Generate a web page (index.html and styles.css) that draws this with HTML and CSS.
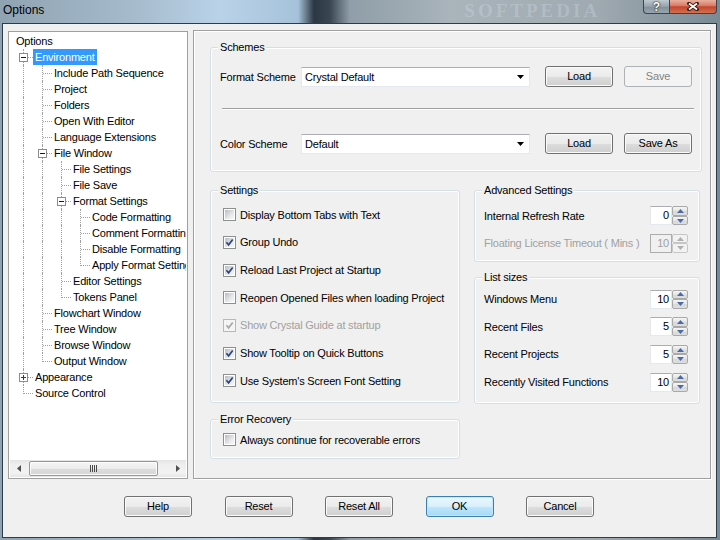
FILE: index.html
```html
<!DOCTYPE html>
<html>
<head>
<meta charset="utf-8">
<link rel="stylesheet" href="styles.css">
</head>
<body>
<div class="win">
  <div class="titlebar">
    <span class="title">Options</span>
    <span class="wm">SOFTPEDIA</span>
    <div class="caps">
      <span class="cap help">?</span>
      <span class="cap close"><svg width="12" height="9" viewBox="0 0 12 9"><path d="M2 1.5 10 7.5M10 1.5 2 7.5" stroke="#3a1a14" stroke-width="3.6" stroke-linecap="square"/><path d="M2 1.5 10 7.5M10 1.5 2 7.5" stroke="#fff" stroke-width="1.8"/></svg></span>
    </div>
  </div>
  <div class="client">
    <div class="main">
      <div class="tree">
        <div class="tree-list">
          <div class="r"><span class="lb">Options</span></div>
          <div class="r"><i class="c t"><svg class="exp" width="9" height="9" viewBox="0 0 9 9"><rect x=".5" y=".5" width="8" height="8" fill="#fff" stroke="#8c8c8c"/><path d="M2 4.5h5" stroke="#1a1a1a"/></svg></i><span class="lb sel">Environment</span></div>
          <div class="r"><i class="c v"></i><i class="c t"></i><span class="lb">Include Path Sequence</span></div>
          <div class="r"><i class="c v"></i><i class="c t"></i><span class="lb">Project</span></div>
          <div class="r"><i class="c v"></i><i class="c t"></i><span class="lb">Folders</span></div>
          <div class="r"><i class="c v"></i><i class="c t"></i><span class="lb">Open With Editor</span></div>
          <div class="r"><i class="c v"></i><i class="c t"></i><span class="lb">Language Extensions</span></div>
          <div class="r"><i class="c v"></i><i class="c t"><svg class="exp" width="9" height="9" viewBox="0 0 9 9"><rect x=".5" y=".5" width="8" height="8" fill="#fff" stroke="#8c8c8c"/><path d="M2 4.5h5" stroke="#1a1a1a"/></svg></i><span class="lb">File Window</span></div>
          <div class="r"><i class="c v"></i><i class="c v"></i><i class="c t"></i><span class="lb">File Settings</span></div>
          <div class="r"><i class="c v"></i><i class="c v"></i><i class="c t"></i><span class="lb">File Save</span></div>
          <div class="r"><i class="c v"></i><i class="c v"></i><i class="c t"><svg class="exp" width="9" height="9" viewBox="0 0 9 9"><rect x=".5" y=".5" width="8" height="8" fill="#fff" stroke="#8c8c8c"/><path d="M2 4.5h5" stroke="#1a1a1a"/></svg></i><span class="lb">Format Settings</span></div>
          <div class="r"><i class="c v"></i><i class="c v"></i><i class="c v"></i><i class="c t"></i><span class="lb">Code Formatting</span></div>
          <div class="r"><i class="c v"></i><i class="c v"></i><i class="c v"></i><i class="c t"></i><span class="lb">Comment Formatting</span></div>
          <div class="r"><i class="c v"></i><i class="c v"></i><i class="c v"></i><i class="c t"></i><span class="lb">Disable Formatting</span></div>
          <div class="r"><i class="c v"></i><i class="c v"></i><i class="c v"></i><i class="c l"></i><span class="lb">Apply Format Settings</span></div>
          <div class="r"><i class="c v"></i><i class="c v"></i><i class="c t"></i><span class="lb">Editor Settings</span></div>
          <div class="r"><i class="c v"></i><i class="c v"></i><i class="c l"></i><span class="lb">Tokens Panel</span></div>
          <div class="r"><i class="c v"></i><i class="c t"></i><span class="lb">Flowchart Window</span></div>
          <div class="r"><i class="c v"></i><i class="c t"></i><span class="lb">Tree Window</span></div>
          <div class="r"><i class="c v"></i><i class="c t"></i><span class="lb">Browse Window</span></div>
          <div class="r"><i class="c v"></i><i class="c l"></i><span class="lb">Output Window</span></div>
          <div class="r"><i class="c t"><svg class="exp" width="9" height="9" viewBox="0 0 9 9"><rect x=".5" y=".5" width="8" height="8" fill="#fff" stroke="#8c8c8c"/><path d="M2 4.5h5M4.5 2v5" stroke="#1c3c8c"/></svg></i><span class="lb">Appearance</span></div>
          <div class="r"><i class="c l"></i><span class="lb">Source Control</span></div>
        </div>
        <div class="hs">
          <span class="arr"><svg width="4" height="7" viewBox="0 0 4 7"><path d="M4 0 0 3.5 4 7Z" fill="#505050"/></svg></span>
          <span class="thumb"><svg width="7" height="7" viewBox="0 0 7 7"><path d="M.5 0v7M2.5 0v7M4.5 0v7M6.5 0v7" stroke="#4a4a4a"/></svg></span>
          <span class="sp"></span>
          <span class="arr"><svg width="4" height="7" viewBox="0 0 4 7"><path d="M0 0 4 3.5 0 7Z" fill="#505050"/></svg></span>
        </div>
      </div>

      <div class="panel">
        <fieldset class="grp schemes">
          <legend>Schemes</legend>
          <div class="srow r1">
            <span class="slabel">Format Scheme</span>
            <span class="combo"><span>Crystal Default</span><svg width="7" height="4" viewBox="0 0 7 4"><path d="M0 0h7L3.5 4Z" fill="#000"/></svg></span>
            <span class="btn b1">Load</span>
            <span class="btn b2 disabled">Save</span>
          </div>
          <div class="sep"></div>
          <div class="srow r2">
            <span class="slabel">Color Scheme</span>
            <span class="combo"><span>Default</span><svg width="7" height="4" viewBox="0 0 7 4"><path d="M0 0h7L3.5 4Z" fill="#000"/></svg></span>
            <span class="btn b1">Load</span>
            <span class="btn b2">Save As</span>
          </div>
        </fieldset>

        <div class="cols">
          <div class="col left">
            <fieldset class="grp settings">
              <legend>Settings</legend>
              <div class="rows">
                <div class="crow"><i class="cb"></i><span>Display Bottom Tabs with Text</span></div>
                <div class="crow"><i class="cb"><svg width="9" height="9" viewBox="0 0 9 9"><path d="M1.4 4.3 3.6 6.8 7.7 1.5" fill="none" stroke="#2a4488" stroke-width="1.7"/></svg></i><span>Group Undo</span></div>
                <div class="crow"><i class="cb"><svg width="9" height="9" viewBox="0 0 9 9"><path d="M1.4 4.3 3.6 6.8 7.7 1.5" fill="none" stroke="#2a4488" stroke-width="1.7"/></svg></i><span>Reload Last Project at Startup</span></div>
                <div class="crow"><i class="cb"></i><span>Reopen Opened Files when loading Project</span></div>
                <div class="crow dis"><i class="cb"><svg width="9" height="9" viewBox="0 0 9 9"><path d="M1.4 4.3 3.6 6.8 7.7 1.5" fill="none" stroke="#a8a8a8" stroke-width="1.7"/></svg></i><span>Show Crystal Guide at startup</span></div>
                <div class="crow"><i class="cb"><svg width="9" height="9" viewBox="0 0 9 9"><path d="M1.4 4.3 3.6 6.8 7.7 1.5" fill="none" stroke="#2a4488" stroke-width="1.7"/></svg></i><span>Show Tooltip on Quick Buttons</span></div>
                <div class="crow"><i class="cb"><svg width="9" height="9" viewBox="0 0 9 9"><path d="M1.4 4.3 3.6 6.8 7.7 1.5" fill="none" stroke="#2a4488" stroke-width="1.7"/></svg></i><span>Use System's Screen Font Setting</span></div>
              </div>
            </fieldset>
            <fieldset class="grp error">
              <legend>Error Recovery</legend>
              <div class="erow"><i class="cb"></i><span>Always continue for recoverable errors</span></div>
            </fieldset>
          </div>

          <div class="col right">
            <fieldset class="grp adv">
              <legend>Advanced Settings</legend>
              <div class="rows">
                <div class="spin-row"><span>Internal Refresh Rate</span><span class="spin"><span class="num">0</span><span class="ud"><span><svg width="7" height="4" viewBox="0 0 7 4"><path d="M0 4h7L3.5 0Z"/></svg></span><span><svg width="7" height="4" viewBox="0 0 7 4"><path d="M0 0h7L3.5 4Z"/></svg></span></span></span></div>
                <div class="spin-row dis"><span>Floating License Timeout ( Mins )</span><span class="spin"><span class="num">10</span><span class="ud"><span><svg width="7" height="4" viewBox="0 0 7 4"><path d="M0 4h7L3.5 0Z"/></svg></span><span><svg width="7" height="4" viewBox="0 0 7 4"><path d="M0 0h7L3.5 4Z"/></svg></span></span></span></div>
              </div>
            </fieldset>
            <fieldset class="grp lists">
              <legend>List sizes</legend>
              <div class="rows">
                <div class="spin-row"><span>Windows Menu</span><span class="spin"><span class="num">10</span><span class="ud"><span><svg width="7" height="4" viewBox="0 0 7 4"><path d="M0 4h7L3.5 0Z"/></svg></span><span><svg width="7" height="4" viewBox="0 0 7 4"><path d="M0 0h7L3.5 4Z"/></svg></span></span></span></div>
                <div class="spin-row"><span>Recent Files</span><span class="spin"><span class="num">5</span><span class="ud"><span><svg width="7" height="4" viewBox="0 0 7 4"><path d="M0 4h7L3.5 0Z"/></svg></span><span><svg width="7" height="4" viewBox="0 0 7 4"><path d="M0 0h7L3.5 4Z"/></svg></span></span></span></div>
                <div class="spin-row"><span>Recent Projects</span><span class="spin"><span class="num">5</span><span class="ud"><span><svg width="7" height="4" viewBox="0 0 7 4"><path d="M0 4h7L3.5 0Z"/></svg></span><span><svg width="7" height="4" viewBox="0 0 7 4"><path d="M0 0h7L3.5 4Z"/></svg></span></span></span></div>
                <div class="spin-row"><span>Recently Visited Functions</span><span class="spin"><span class="num">10</span><span class="ud"><span><svg width="7" height="4" viewBox="0 0 7 4"><path d="M0 4h7L3.5 0Z"/></svg></span><span><svg width="7" height="4" viewBox="0 0 7 4"><path d="M0 0h7L3.5 4Z"/></svg></span></span></span></div>
              </div>
            </fieldset>
          </div>
        </div>
      </div>
    </div>

    <div class="buttons">
      <span class="btn">Help</span>
      <span class="btn">Reset</span>
      <span class="btn">Reset All</span>
      <span class="btn default">OK</span>
      <span class="btn">Cancel</span>
    </div>
  </div>
</div>
</body>
</html>
```

FILE: styles.css
```css
* { box-sizing: border-box; }
html, body { margin: 0; padding: 0; }
body {
  width: 720px;
  height: 540px;
  overflow: hidden;
  font-family: "Liberation Sans", Arial, sans-serif;
  font-size: 11px;
  letter-spacing: -0.2px;
  color: #000;
  background: linear-gradient(90deg, #8fa3b3 0px, #a3b8c8 120px, #b9d2e8 220px, #a6c2da 298px, #2b3742 314px, #3a4753 330px, #8f9ea8 350px, #a9b4bb 450px, #9ea9b0 600px, #7a8a95 720px);
}
.win { display: flex; flex-direction: column; height: 540px; }

/* title bar */
.titlebar { height: 23px; flex: none; display: flex; align-items: flex-start; padding-left: 3px; }
.title { font-size: 12px; line-height: 21px; letter-spacing: 0; color: #000; }
.wm { flex: none; margin-left: 420px; font-family: "Liberation Serif", serif; font-weight: bold; font-size: 19px; line-height: 22px; letter-spacing: 3px; color: rgba(220, 228, 235, 0.28); }
.caps { margin-left: auto; margin-right: 3px; display: flex; }
.cap { height: 14px; display: flex; align-items: center; justify-content: center; border: 1px solid #3a4450; border-top: none; }
.help { width: 27px; border-radius: 0 0 0 4px; background: linear-gradient(#c0c9d0, #95a2ac 50%, #828f9a 51%, #97a5af); color: #fff; font-weight: bold; font-size: 12px; line-height: 12px; letter-spacing: 0; text-shadow: 0 0 2px #1a1a1a, 0 0 1px #1a1a1a; }
.close { width: 47px; border-left: none; border-radius: 0 0 4px 0; background: linear-gradient(#eab0a0, #d67a62 45%, #c4452c 52%, #d2704f); }

/* client */
.client { flex: 1; margin: 0 3px 2px 2px; border: 1px solid #2e3b48; background: #f0f0f0; display: flex; flex-direction: column; }
.main { display: flex; gap: 5px; padding: 6px 0 0 5px; }

/* tree */
.tree { width: 180px; height: 448px; margin-top: 1px; border: 1px solid #a0a0a0; padding: 1px; background: #fff; display: flex; flex-direction: column; }
.tree-list { flex: 1; overflow: hidden; }
.r { display: flex; height: 16px; padding-left: 4px; white-space: nowrap; }
.c { flex: none; width: 19px; height: 16px; position: relative; }
.v::before, .t::before { content: ""; position: absolute; left: 9px; top: 0; bottom: 0; border-left: 1px dotted #a0a0a0; }
.l::before { content: ""; position: absolute; left: 9px; top: 0; height: 9px; border-left: 1px dotted #a0a0a0; }
.t::after, .l::after { content: ""; position: absolute; left: 10px; right: 0; top: 8px; border-top: 1px dotted #a0a0a0; }
.exp { position: absolute; left: 5px; top: 4px; z-index: 1; display: block; }
.lb { padding: 0 2px; line-height: 16px; }
.sel { background: #3399ff; color: #fff; }

.hs { height: 17px; flex: none; display: flex; align-items: center; background: linear-gradient(#e3e3e3, #eeeeee 25%, #f2f2f2 75%, #e6e6e6); }
.arr { width: 17px; height: 17px; flex: none; display: flex; align-items: center; justify-content: center; }
.arr svg, .thumb svg { display: block; }
.thumb { width: 129px; height: 15px; margin-left: 2px; flex: none; border: 1px solid #979797; border-radius: 2px; background: linear-gradient(#f6f6f6, #ececec 50%, #dcdcdc 51%, #d6d6d6); box-shadow: inset 0 0 0 1px #fbfbfb; display: flex; align-items: center; justify-content: center; }
.sp { flex: 1; }

/* right panel */
.panel { width: 518px; height: 449px; border: 1px solid #a0a0a0; box-shadow: inset 1px 1px 0 #fff, 1px 1px 0 #fff; padding: 10px 0 0 16px; }
.grp { margin: 0; padding: 0; min-width: 0; border: 1px solid #d5dfe5; border-radius: 3px; box-shadow: inset 0 0 0 1px #fff; }
.grp legend { margin-left: 7px; padding: 0 2px; line-height: 13px; background: #f0f0f0; }

.schemes { width: 492px; padding-bottom: 17px; }
.srow { display: flex; align-items: center; height: 21px; padding-left: 9px; }
.srow.r1 { margin-top: 12px; }
.srow.r2 { margin-top: 24px; }
.slabel { width: 81px; flex: none; }
.combo { width: 229px; height: 20px; flex: none; display: flex; align-items: center; justify-content: space-between; padding: 0 5px 0 3px; background: #fff; border: 1px solid #e3e9ef; border-top-color: #abadb3; }
.combo svg { display: block; }
.sep { margin: 21px 0 0 11px; width: 472px; height: 1px; background: #a0a0a0; box-shadow: 0 1px 0 #fff; }

.btn { flex: none; display: inline-block; width: 68px; height: 21px; line-height: 19px; text-align: center; border: 1px solid #707070; border-radius: 3px; background: linear-gradient(#f2f2f2, #ebebeb 50%, #dddddd 51%, #cfcfcf); box-shadow: inset 0 0 0 1px #fbfbfb; color: #000; }
.btn.b1 { margin-left: 15px; }
.btn.b2 { margin-left: 11px; }
.btn.disabled { border-color: #adb2b5; background: #f4f4f4; box-shadow: none; color: #838383; }
.btn.default { border-color: #3c7fb1; background: linear-gradient(#eaf6fd, #d9f0fc 50%, #bee6fd 51%, #a7d9f5); box-shadow: inset 0 0 0 1px #c4e6f9; }

.cols { display: flex; gap: 14px; margin-top: 12px; }
.col { display: flex; flex-direction: column; }
.col.left { width: 250px; }
.col.right { width: 226px; }

.settings .rows { padding: 4px 0 7px 12px; }
.crow { height: 27.67px; display: flex; align-items: center; }
.crow.dis { color: #a0a0a0; }
.cb { display: inline-block; flex: none; width: 13px; height: 13px; margin-right: 4px; border: 1px solid #8e8f8f; padding: 1px; background: linear-gradient(135deg, #b8bcc2, #e6e8ea 60%, #f8f8f8) content-box, #fff; }
.cb svg { display: block; }
.crow.dis .cb { border-color: #b8b8b8; background: #f4f4f4; }

.error { margin-top: 10px; }
.erow { height: 14px; display: flex; align-items: center; margin: 7px 0 11px 12px; }

.adv .rows { padding: 5px 0 4px 0; }
.lists { margin-top: 9px; }
.lists .rows { padding: 1px 0 7px 0; }
.spin-row { height: 27.67px; display: flex; align-items: center; justify-content: space-between; padding: 0 11px 0 9px; }
.spin-row.dis { color: #a0a0a0; }
.spin { display: flex; height: 19px; }
.num { width: 22px; height: 19px; background: #fff; border: 1px solid #e3e9ef; border-top-color: #abadb3; text-align: right; padding-right: 2px; line-height: 17px; color: #000; }
.ud { width: 16px; height: 19px; display: flex; flex-direction: column; }
.ud span { flex: 1; display: flex; align-items: center; justify-content: center; border: 1px solid #a9a9a9; border-radius: 2px; background: linear-gradient(#f6f6f6, #e4e4e4 50%, #d8d8d8 51%, #dedede); }
.ud svg { display: block; fill: #4d6aa8; }
.spin-row.dis .num { background: #f0f0f0; border-color: #adadad; color: #a0a0a0; }
.spin-row.dis .ud span { border-color: #c6c6c6; background: #f2f2f2; }
.spin-row.dis .ud svg { fill: #b0b0b0; }

.buttons { display: flex; gap: 32.5px; padding-left: 121px; margin-top: 17px; }
```
